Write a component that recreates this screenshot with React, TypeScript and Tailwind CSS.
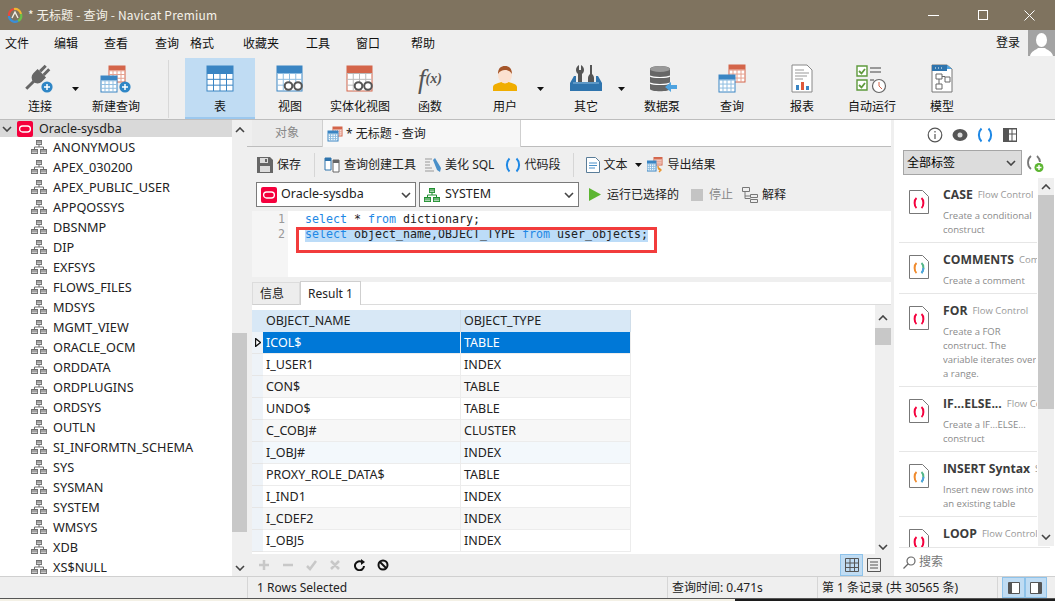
import type { ReactNode } from "react";

const menus = [
  { label: "文件", width: "w-[49px]" },
  { label: "编辑", width: "w-[50px]" },
  { label: "查看", width: "w-[51px]" },
  { label: "查询", width: "w-[35px]" },
  { label: "格式", width: "w-[53px]" },
  { label: "收藏夹", width: "w-[63px]" },
  { label: "工具", width: "w-[50px]" },
  { label: "窗口", width: "w-[55px]" },
  { label: "帮助", width: "w-[40px]" },
];

const schemas = [
  "ANONYMOUS",
  "APEX_030200",
  "APEX_PUBLIC_USER",
  "APPQOSSYS",
  "DBSNMP",
  "DIP",
  "EXFSYS",
  "FLOWS_FILES",
  "MDSYS",
  "MGMT_VIEW",
  "ORACLE_OCM",
  "ORDDATA",
  "ORDPLUGINS",
  "ORDSYS",
  "OUTLN",
  "SI_INFORMTN_SCHEMA",
  "SYS",
  "SYSMAN",
  "SYSTEM",
  "WMSYS",
  "XDB",
  "XS$NULL",
];

const rows = [
  ["ICOL$", "TABLE", "bg-[#0078d7] text-white"],
  ["I_USER1", "INDEX", "bg-white"],
  ["CON$", "TABLE", "bg-[#f7f7f7]"],
  ["UNDO$", "TABLE", "bg-white"],
  ["C_COBJ#", "CLUSTER", "bg-[#f7f7f7]"],
  ["I_OBJ#", "INDEX", "bg-[#f3f8fc]"],
  ["PROXY_ROLE_DATA$", "TABLE", "bg-white"],
  ["I_IND1", "INDEX", "bg-white"],
  ["I_CDEF2", "INDEX", "bg-[#f7f7f7]"],
  ["I_OBJ5", "INDEX", "bg-white"],
];

const snippets = [
  { title: "CASE", tag: "Flow Control", lines: ["Create a conditional", "construct"], multi: false, h: "h-[65px]" },
  { title: "COMMENTS", tag: "Comment", lines: ["Create a comment"], multi: true, h: "h-[51px]" },
  { title: "FOR", tag: "Flow Control", lines: ["Create a FOR", "construct. The", "variable iterates over", "a range."], multi: false, h: "h-[93px]" },
  { title: "IF...ELSE...", tag: "Flow Control", lines: ["Create a IF...ELSE...", "construct"], multi: false, h: "h-[65px]" },
  { title: "INSERT Syntax", tag: "SQL", lines: ["Insert new rows into", "an existing table"], multi: true, h: "h-[65px]" },
  { title: "LOOP", tag: "Flow Control", lines: ["Create a loop"], multi: false, h: "h-[65px]" },
];

function Caret() {
  return (
    <svg viewBox="0 0 7 4" className="h-[4px] w-[7px] shrink-0">
      <path d="M0 0h7L3.5 4z" fill="#111" />
    </svg>
  );
}

function Chevron({ up, className }: { up?: boolean; className?: string }) {
  return (
    <svg viewBox="0 0 10 6" className={`h-[6px] w-[10px] shrink-0 ${className ?? ""}`}>
      <path d={up ? "M1 5l4-4 4 4" : "M1 1l4 4 4-4"} fill="none" stroke="#444" strokeWidth="1.6" />
    </svg>
  );
}

function SchemaIcon({ color = "#6f6f6f" }: { color?: string }) {
  return (
    <svg viewBox="0 0 16 14" className="h-[14px] w-[16px] shrink-0">
      <path d="M5 0h6v5H5zM0 9h7v5H0zM9 9h7v5H9z" fill={color} />
      <path d="M5.8 2h4.4M5.8 3.6h4.4M.8 11h5.4M.8 12.6h5.4M9.8 11h5.4M9.8 12.6h5.4" stroke="#fff" strokeWidth=".7" />
      <path d="M8 5v2M3.5 9V7h9v2" fill="none" stroke={color} />
    </svg>
  );
}

function OracleBadge({ size }: { size: string }) {
  return (
    <svg viewBox="0 0 16 16" className={`${size} shrink-0`}>
      <rect width="16" height="16" rx="2" fill="#f5003d" />
      <rect x="2.6" y="5" width="10.8" height="6" rx="3" fill="none" stroke="#fff" strokeWidth="1.3" />
    </svg>
  );
}

function Sheet({ x, y, w, h, color, line }: { x: number; y: number; w: number; h: number; color: string; line: string }) {
  const cols = [1, 2, 3].map((i) => x + (w * i) / 4);
  const lines = [0, 1, 2].map((i) => y + h * 0.3 + ((h * 0.7) / 3) * i);
  return (
    <g>
      <rect x={x} y={y} width={w} height={h} fill="#fff" stroke={color} />
      <rect x={x} y={y} width={w} height={h * 0.28} fill={color} />
      {cols.map((c) => (
        <path key={c} d={`M${c} ${y + h * 0.28}V${y + h}`} stroke={line} />
      ))}
      {lines.map((l) => (
        <path key={l} d={`M${x} ${l}H${x + w}`} stroke={line} />
      ))}
    </g>
  );
}

function Glasses() {
  return (
    <g fill="#fff" stroke="#555" strokeWidth="2">
      <circle cx="14.5" cy="22" r="3.8" />
      <circle cx="24" cy="22" r="3.8" />
    </g>
  );
}

function PlusDot({ cx, cy }: { cx: number; cy: number }) {
  return (
    <g>
      <circle cx={cx} cy={cy} r="5.6" fill="#2f86c6" />
      <path d={`M${cx - 3} ${cy}h6M${cx} ${cy - 3}v6`} stroke="#fff" strokeWidth="1.5" />
    </g>
  );
}

function ToolIcon({ name }: { name: string }) {
  const box = "h-[30px] w-[32px]";
  if (name === "connect")
    return (
      <svg viewBox="0 0 32 30" className={box}>
        <g transform="rotate(45 15 12)" fill="#666">
          <path d="M9 8h12v6a6 6 0 0 1-12 0z" />
          <path d="M11 0h3v8h-3zM16 0h3v8h-3z" />
          <path d="M13.500 19h3v11h-3z" />
        </g>
        <PlusDot cx={23} cy={23} />
      </svg>
    );
  if (name === "newquery")
    return (
      <svg viewBox="0 0 32 30" className={box}>
        <Sheet x={9} y={2} w={16} h={16} color="#d4654a" line="#e6a08f" />
        <Sheet x={1} y={12} w={16} h={16} color="#3a85c3" line="#8fbde0" />
        <PlusDot cx={25} cy={23} />
      </svg>
    );
  if (name === "table")
    return (
      <svg viewBox="0 0 32 30" className={box}>
        <Sheet x={3} y={2} w={26} h={25} color="#3a85c3" line="#3a85c3" />
      </svg>
    );
  if (name === "view")
    return (
      <svg viewBox="0 0 32 30" className={box}>
        <Sheet x={3} y={2} w={25} h={25} color="#3a85c3" line="#8fbde0" />
        <Glasses />
      </svg>
    );
  if (name === "matview")
    return (
      <svg viewBox="0 0 32 30" className={box}>
        <Sheet x={3} y={2} w={25} h={25} color="#d4654a" line="#bbb" />
        <Glasses />
      </svg>
    );
  if (name === "func")
    return (
      <div className={`${box} flex items-center justify-center font-['Liberation_Serif',serif] italic text-[#555]`}>
        <span className="text-[27px] leading-none">f</span>
        <span className="text-[14px] font-bold leading-none">(x)</span>
      </div>
    );
  if (name === "user")
    return (
      <svg viewBox="0 0 32 30" className={box}>
        <path d="M4 27v-4c0-3 6-4 8-5h8c2 1 8 2 8 5v4z" fill="#f0ad00" />
        <ellipse cx="16" cy="11" rx="7" ry="8.5" fill="#fbe1d0" />
        <path d="M9 10c0-6 3-8 7-8s7 2 7 8c-2-3-4-4-7-4s-5 1-7 4z" fill="#a5562a" />
      </svg>
    );
  if (name === "other")
    return (
      <svg viewBox="0 0 32 30" className={box}>
        <path d="M11 1v5h-2V1C7 2 6 4 6 6c0 2 1 3 2 4v9h4v-9c1-1 2-2 2-4 0-2-1-4-3-5z" fill="#555" />
        <path d="M20 1h2v9c1 1 2 2 2 4v5h-6v-5c0-2 1-3 2-4z" fill="#555" />
        <path d="M0 19l4-7h2v6h20v-6h2l4 7v8H0z" fill="#2f74ad" />
        <path d="M3 19h26" stroke="#8dbce0" />
      </svg>
    );
  if (name === "pump")
    return (
      <svg viewBox="0 0 32 30" className={box}>
        <path d="M4 5c0-4 20-4 20 0v20c0 3-20 3-20 0z" fill="#666" />
        <ellipse cx="14" cy="5" rx="10" ry="3" fill="#999" />
        <path d="M4 12c3 2 17 2 20 0M4 19c3 2 17 2 20 0" stroke="#fff" fill="none" strokeWidth="1.2" />
        <path d="M19 23l6-5v3h6v4h-6v3z" fill="#4ea3e0" />
      </svg>
    );
  if (name === "query")
    return (
      <svg viewBox="0 0 32 30" className={box}>
        <Sheet x={13} y={1} w={16} h={17} color="#d4654a" line="#e6a08f" />
        <Sheet x={3} y={11} w={16} h={17} color="#3a85c3" line="#8fbde0" />
      </svg>
    );
  if (name === "report")
    return (
      <svg viewBox="0 0 32 30" className={box}>
        <path d="M6 1h15l5 5v22H6z" fill="#fff" stroke="#888" />
        <path d="M9 6h9M9 9h14M9 12h12M9 15h8" stroke="#999" />
        <path d="M10 21h3v5h-3z" fill="#3a85c3" />
        <path d="M15 18h3v8h-3z" fill="#e0583a" />
        <path d="M20 22h3v4h-3z" fill="#3a85c3" />
      </svg>
    );
  if (name === "auto")
    return (
      <svg viewBox="0 0 32 30" className={box}>
        <path d="M1 2h10v10H1zM1 16h10v10H1z" fill="#fff" stroke="#5e9a3c" strokeWidth="1.4" />
        <path d="M3 7l2.5 2.5L9 5M3 21l2.5 2.5L9 19" fill="none" stroke="#5e9a3c" strokeWidth="1.8" />
        <path d="M14 4h11M14 8h11M14 16h4" stroke="#999" strokeWidth="1.8" />
        <circle cx="23" cy="22" r="6.5" fill="#fff" stroke="#666" strokeWidth="1.2" />
        <path d="M23 22v-4M23 22l3 3" stroke="#d4654a" />
      </svg>
    );
  return (
    <svg viewBox="0 0 32 30" className={box}>
      <path d="M6 1h15l5 4v23H6z" fill="#fff" stroke="#777" />
      <path d="M6 1h15v6H6z" fill="#2f74ad" />
      <path d="M21 1l5 4h-5z" fill="#4ea3e0" />
      <path d="M9 4h1M12 4h1M15 4h1" stroke="#fff" />
      <path d="M10 10h6v5h-6zM19 13h5v5h-5zM10 20h6v5h-6z" fill="#fff" stroke="#666" />
      <path d="M16 12.5h3M13 15v5" stroke="#666" />
    </svg>
  );
}

function Tool({ name, label, active }: { name: string; label: string; active?: boolean }) {
  return (
    <div className={`flex h-[61px] w-[70px] shrink-0 flex-col items-center pt-[6px] ${active ? "border-b-2 border-[#9cc8ee] bg-[#c0dcf3]" : ""}`}>
      <ToolIcon name={name} />
      <span className="mt-[4px] whitespace-nowrap text-[12px] leading-[16px]">{label}</span>
    </div>
  );
}

function Spacer({ className, children }: { className: string; children?: ReactNode }) {
  return <div className={`flex h-[61px] shrink-0 items-center ${className}`}>{children}</div>;
}

function CodeIcon({ multi }: { multi?: boolean }) {
  const left = multi ? "#f08a2c" : "#f5003d";
  const right = multi ? "#4ea3e0" : "#f5003d";
  return (
    <svg viewBox="0 0 20 24" className="h-[24px] w-[20px] shrink-0">
      <path d="M.5.5h13l6 6v17H.5z" fill="#fff" stroke="#777" />
      <path d="M7.5 8c-2.5 2-2.5 8 0 10" fill="none" stroke={left} strokeWidth="2" />
      <path d="M12.5 8c2.5 2 2.5 8 0 10" fill="none" stroke={multi ? "#52b788" : right} strokeWidth="2" />
      {multi && <path d="M14.4 13c0 2-.8 3.700-1.900 5" fill="none" stroke={right} strokeWidth="2" />}
    </svg>
  );
}

function Parens({ className, color = "#1e88e5" }: { className?: string; color?: string }) {
  return (
    <svg viewBox="0 0 16 16" className={`h-[16px] w-[16px] shrink-0 ${className ?? ""}`}>
      <path d="M4.500 1.500c-3.500 3.500-3.500 9.500 0 13M11.500 1.500c3.500 3.500 3.500 9.500 0 13" fill="none" stroke={color} strokeWidth="2" />
    </svg>
  );
}

function TitleBar() {
  return (
    <div className="flex h-[30px] shrink-0 items-center bg-[#7f735f] text-[#f5f2ea]">
      <svg viewBox="0 0 16 16" className="ml-[7px] h-[16px] w-[16px] shrink-0" fill="none" strokeWidth="2.200">
        <path d="M2 9a6 6 0 0 1 5-7" stroke="#e8493a" />
        <path d="M7 2a6 6 0 0 1 7 5" stroke="#f2b632" />
        <path d="M14 7a6 6 0 0 1-3 7" stroke="#6abf4b" />
        <path d="M11 14a6 6 0 0 1-9-5" stroke="#3a8fd8" />
        <path d="M5 11l3-6 3 6" stroke="#f3efe6" strokeWidth="1.400" />
      </svg>
      <span className="ml-[5px] text-[12px] tracking-[0.2px]">* 无标题 - 查询 - Navicat Premium</span>
      <div className="ml-auto flex items-center">
        <div className="mr-[39px] h-px w-[11px] bg-white" />
        <div className="mr-[36px] h-[10px] w-[10px] border border-white" />
        <svg viewBox="0 0 11 11" className="mr-[20px] h-[11px] w-[11px]">
          <path d="M.5.5l10 10M10.500.5l-10 10" stroke="#fff" />
        </svg>
      </div>
    </div>
  );
}

function Toolbar() {
  return (
    <div className="shrink-0 border-b border-[#bdbdbd] bg-[#efefef] text-[#111]">
      <div className="flex h-[28px] items-start pl-[5px]">
        {menus.map((menu) => (
          <span key={menu.label + menu.width} className={`${menu.width} pt-[4px] text-[12px] leading-[18px]`}>
            {menu.label}
          </span>
        ))}
        <span className="ml-auto mr-[8px] pt-[3px] text-[12px] leading-[18px]">登录</span>
        <div className="flex h-[26px] w-[27px] items-end justify-center overflow-hidden bg-[#a3a3a3]">
          <svg viewBox="0 0 27 26" className="h-[26px] w-[27px]">
            <ellipse cx="13.500" cy="10" rx="5.500" ry="7" fill="#fff" />
            <path d="M2 26c1-5 6-6 8-8h7c2 2 7 3 8 8z" fill="#fff" />
          </svg>
        </div>
      </div>
      <div className="flex h-[61px] items-start pl-[5px]">
        <Tool name="connect" label="连接" />
        <Spacer className="w-[6px] -translate-x-[3px]">
          <Caret />
        </Spacer>
        <Tool name="newquery" label="新建查询" />
        <Spacer className="ml-[17px] mr-[16px] w-px">
          <div className="h-[58px] w-px bg-[#d8d8d8]" />
        </Spacer>
        <Tool name="table" label="表" active />
        <Tool name="view" label="视图" />
        <Tool name="matview" label="实体化视图" />
        <Tool name="func" label="函数" />
        <div className="w-[5px] shrink-0" />
        <Tool name="user" label="用户" />
        <Spacer className="w-[11px] -translate-x-[3px]">
          <Caret />
        </Spacer>
        <Tool name="other" label="其它" />
        <Spacer className="w-[6px] -translate-x-[3px]">
          <Caret />
        </Spacer>
        <Tool name="pump" label="数据泵" />
        <Tool name="query" label="查询" />
        <Tool name="report" label="报表" />
        <Tool name="auto" label="自动运行" />
        <Tool name="model" label="模型" />
      </div>
    </div>
  );
}

function Sidebar() {
  return (
    <div className="flex w-[247px] shrink-0 bg-white">
      <div className="w-[232px] shrink-0 overflow-hidden text-[#222]">
        <div className="flex h-[17px] items-center bg-[#d9d9d9]">
          <Chevron className="ml-[2px]" />
          <div className="ml-[5px]">
            <OracleBadge size="h-[16px] w-[16px]" />
          </div>
          <span className="ml-[6px] text-[12.500px] leading-[17px]">Oracle-sysdba</span>
        </div>
        {schemas.map((name) => (
          <div key={name} className="flex h-[20px] items-center pl-[31px]">
            <SchemaIcon />
            <span className="ml-[6px] whitespace-nowrap text-[12.700px] leading-[20px]">{name}</span>
          </div>
        ))}
      </div>
      <div className="flex w-[15px] shrink-0 flex-col items-center bg-[#efefef]">
        <Chevron up className="mt-[7px]" />
        <div className="mt-[200px] h-[199px] w-full bg-[#c8c8c8]" />
        <Chevron className="mt-[33px]" />
      </div>
    </div>
  );
}

function QueryPane() {
  return (
    <div className="flex w-[644px] shrink-0 flex-col text-[#222]">
      <div className="flex h-[27px] shrink-0 border-b border-[#bdbdbd] pl-[5px]">
        <div className="flex w-[70px] items-center justify-center bg-[#ebebeb] text-[12px] text-[#888]">对象</div>
        <div className="flex h-[27px] w-[199px] items-center border-x border-[#cfcfcf] bg-[#f7f7f7] pl-[4px]">
          <svg viewBox="0 0 16 16" className="h-[16px] w-[16px] shrink-0">
            <Sheet x={6} y={1} w={9} h={9} color="#d4654a" line="#e6a08f" />
            <Sheet x={1} y={5} w={10} h={10} color="#3a85c3" line="#8fbde0" />
          </svg>
          <span className="ml-[3px] text-[12px]">* 无标题 - 查询</span>
        </div>
        <div className="flex-1 bg-white" />
      </div>
      <div className="flex h-[34px] shrink-0 items-center pl-[10px] pt-[2px] text-[12px]">
        <svg viewBox="0 0 16 16" className="h-[16px] w-[16px] shrink-0">
          <path d="M0 0h13l3 3v13H0z" fill="#666" />
          <path d="M3 1h8v5H3zM3 9h10v6H3z" fill="#ddd" />
          <path d="M8 2h2v3H8z" fill="#666" />
        </svg>
        <span className="ml-[4px]">保存</span>
        <div className="ml-[13px] mr-[9px] h-[24px] w-px bg-[#d6d6d6]" />
        <svg viewBox="0 0 16 16" className="h-[16px] w-[16px] shrink-0">
          <path d="M1 1h6v12H1z" fill="#fff" stroke="#2f74ad" />
          <path d="M9 3h6v12H9z" fill="#fff" stroke="#666" />
          <path d="M1 1h6v3H1z" fill="#2f74ad" />
          <path d="M9 3h6v3H9z" fill="#666" />
        </svg>
        <span className="ml-[4px]">查询创建工具</span>
        <svg viewBox="0 0 16 16" className="ml-[9px] h-[16px] w-[16px] shrink-0">
          <path d="M0 2h7M0 5h5M0 8h5M0 11h7M0 14h9" stroke="#999" />
          <path d="M8 3l2-2 6 10-1 4-3-2z" fill="#4a90c9" />
        </svg>
        <span className="ml-[4px] font-['Noto_Sans','Noto_Sans_CJK_SC',sans-serif]">美化 SQL</span>
        <Parens className="ml-[11px]" />
        <span className="ml-[3px]">代码段</span>
        <div className="ml-[13px] mr-[12px] h-[24px] w-px bg-[#d6d6d6]" />
        <svg viewBox="0 0 14 16" className="h-[16px] w-[14px] shrink-0">
          <path d="M.5.500h9l4 4v11H.500z" fill="#fff" stroke="#5a7d99" />
          <path d="M3 6h8M3 8.500h8M3 11h6" stroke="#4a90c9" />
        </svg>
        <span className="ml-[3px]">文本</span>
        <div className="ml-[8px] mr-[5px]">
          <Caret />
        </div>
        <svg viewBox="0 0 16 16" className="h-[16px] w-[16px] shrink-0">
          <Sheet x={7} y={0} w={8} h={8} color="#d4654a" line="#e6a08f" />
          <Sheet x={0} y={4} w={9} h={10} color="#3a85c3" line="#8fbde0" />
          <path d="M11 9c0 3 1 4 3 4M12 15l2-2-2-2" fill="none" stroke="#e8932c" strokeWidth="1.400" />
        </svg>
        <span className="ml-[4px]">导出结果</span>
      </div>
      <div className="mt-px flex h-[25px] shrink-0 items-center pl-[9px] text-[12px]">
        <div className="flex h-[25px] w-[160px] items-center border border-[#7a7a7a] bg-white pl-[4px]">
          <OracleBadge size="h-[16px] w-[16px]" />
          <span className="ml-[4px] text-[12.500px]">Oracle-sysdba</span>
          <Chevron className="ml-auto mr-[4px]" />
        </div>
        <div className="ml-[3px] flex h-[25px] w-[160px] items-center border border-[#7a7a7a] bg-white pl-[4px]">
          <SchemaIcon color="#1f8f2f" />
          <span className="ml-[5px] text-[12.500px]">SYSTEM</span>
          <Chevron className="ml-auto mr-[4px]" />
        </div>
        <svg viewBox="0 0 12 13" className="ml-[10px] h-[13px] w-[12px] shrink-0">
          <path d="M0 0l12 6.500L0 13z" fill="#5cb531" />
        </svg>
        <span className="ml-[6px]">运行已选择的</span>
        <div className="ml-[12px] h-[12px] w-[12px] bg-[#c4c4c4]" />
        <span className="ml-[6px] text-[#8a8a8a]">停止</span>
        <svg viewBox="0 0 16 16" className="ml-[9px] h-[16px] w-[16px] shrink-0" fill="none" stroke="#777">
          <path d="M.5.500h7v4h-7zM8.500 7.500h7v3h-7zM8.500 12.500h7v3h-7zM3 4.500v7h5.500M3 9h5.500" />
        </svg>
        <span className="ml-[4px]">解释</span>
      </div>
      <div className="relative ml-[5px] mt-[4px] flex h-[66px] shrink-0 bg-white font-['DejaVu_Sans_Mono',monospace] text-[11.630px] leading-[15px]">
        <div className="w-[36px] shrink-0 bg-[#f5f5f5] pr-[3px] pt-[1px] text-right text-[#999]">
          <div>1</div>
          <div>2</div>
        </div>
        <div className="pl-[17px] pt-[1px]">
          <div className="whitespace-pre">
            <span className="text-[#1e88e5]">select</span> * <span className="text-[#1e88e5]">from</span> dictionary;
          </div>
          <div className="whitespace-pre bg-[#bcdcf8]">
            <span className="text-[#1e88e5]">select</span> object_name,OBJECT_TYPE <span className="text-[#1e88e5]">from</span> user_objects;
          </div>
        </div>
        <div className="absolute left-[44px] top-[16px] h-[26px] w-[361px] border-[3px] border-[#f23c3c]" />
      </div>
      <div className="ml-[5px] mt-[5px] flex h-[23px] shrink-0 items-end bg-white text-[12px]">
        <div className="flex h-[23px] w-[48px] items-center border border-[#dcdcdc] border-b-[#cfcfcf] bg-[#ededed] pl-[7px]">信息</div>
        <div className="-mb-px flex h-[25px] w-[61px] items-center justify-center border-x border-t border-[#cfcfcf] bg-white font-['Noto_Sans',sans-serif]">
          Result 1
        </div>
        <div className="h-px flex-1 bg-[#dcdcdc]" />
      </div>
      <div className="ml-[5px] flex h-[249px] shrink-0 bg-white">
        <div className="flex-1 pt-[5px] font-['Noto_Sans',sans-serif] text-[12.500px]">
          <div className="flex h-[22px] w-[379px] bg-[#d8e8f6]">
            <div className="w-[11px] shrink-0" />
            <div className="flex w-[198px] items-center border-r border-[#cfdde9] pl-[3px]">OBJECT_NAME</div>
            <div className="flex w-[170px] items-center border-r border-[#cfdde9] pl-[3px]">OBJECT_TYPE</div>
          </div>
          {rows.map(([name, type, tone], i) => (
            <div key={name} className="flex h-[22px] w-[379px]">
              <div className="flex w-[11px] shrink-0 items-center justify-center border-b border-[#e6e6e6] bg-[#eef3f8]">
                {i === 0 && (
                  <svg viewBox="0 0 6 9" className="h-[9px] w-[6px]">
                    <path d="M.5.500L5.500 4.500.5 8.500z" fill="#fff" stroke="#111" strokeWidth="1.400" />
                  </svg>
                )}
              </div>
              <div className={`flex w-[198px] items-center border-b border-r border-[#ececec] pl-[3px] pt-px ${tone}`}>{name}</div>
              <div className={`flex w-[170px] items-center border-b border-r border-[#ececec] pl-[3px] pt-px ${tone}`}>{type}</div>
            </div>
          ))}
        </div>
        <div className="flex w-[16px] shrink-0 flex-col items-center bg-[#efefef]">
          <Chevron up className="mt-[10px]" />
          <div className="mt-[7px] h-[17px] w-full bg-[#c8c8c8]" />
          <Chevron className="mt-[199px]" />
        </div>
      </div>
      <div className="flex h-[22px] shrink-0 items-center pl-[12px] text-[#c4c4c4]">
        <svg viewBox="0 0 144 12" className="h-[12px] w-[144px]" fill="none" strokeWidth="2.500">
          <path d="M0 6h10M5 1v10M24 6h10M48 7l3 3 6-8M72 2l8 8M80 2l-8 8" stroke="#c8c8c8" />
          <path d="M103 3a4.500 4.500 0 1 0 2 4" stroke="#111" strokeWidth="2" />
          <path d="M102 0l4 3-4 3z" fill="#111" stroke="none" />
          <circle cx="124" cy="6" r="4.500" stroke="#111" strokeWidth="2" />
          <path d="M121 3l6 6" stroke="#111" strokeWidth="2" />
        </svg>
        <div className="ml-auto flex h-[22px] w-[23px] items-center justify-center border border-[#8fc3ea] bg-[#c0dcf3]">
          <svg viewBox="0 0 14 14" className="h-[14px] w-[14px]" fill="none" stroke="#555">
            <path d="M.5.500h13v13H.500zM.5 5h13M.5 9.500h13M5 .5v13M9.500.5v13" />
          </svg>
        </div>
        <div className="ml-[3px] mr-[9px] flex h-[22px] w-[16px] items-center justify-center">
          <svg viewBox="0 0 14 14" className="h-[14px] w-[14px]" fill="none" stroke="#555">
            <path d="M.5.500h13v13H.500zM3 4h8M3 7h8M3 10h8" />
          </svg>
        </div>
      </div>
    </div>
  );
}

function SnippetPanel() {
  return (
    <div className="flex w-[161px] shrink-0 flex-col bg-white">
      <div className="flex h-[30px] shrink-0 items-center pl-[33px]">
        <svg viewBox="0 0 16 16" className="h-[16px] w-[16px]" fill="none" stroke="#555" strokeWidth="1.200">
          <circle cx="8" cy="8" r="6.800" />
          <path d="M8 7v5M8 4v1.500" />
        </svg>
        <svg viewBox="0 0 16 16" className="ml-[9px] h-[16px] w-[16px]">
          <ellipse cx="8" cy="8" rx="7.500" ry="6" fill="#555" />
          <circle cx="8" cy="8" r="2.500" fill="#ddd" />
        </svg>
        <Parens className="ml-[9px]" />
        <svg viewBox="0 0 16 16" className="ml-[9px] h-[16px] w-[16px]">
          <path d="M1 1h14v14H1z" fill="#555" />
          <path d="M7 2.500h2.500v4H7zM10.500 2.500H14v4h-3.500zM7 7.500h2.500v6H7zM10.500 7.500H14v6h-3.500z" fill="#fff" />
        </svg>
      </div>
      <div className="flex h-[25px] shrink-0 items-center pl-[9px]">
        <div className="flex h-[25px] w-[119px] items-center border border-[#a5a5a5] bg-[#dcdcdc] pl-[3px] pt-px text-[12px]">
          全部标签
          <Chevron className="ml-auto mr-[5px]" />
        </div>
        <svg viewBox="0 0 18 18" className="ml-[4px] h-[18px] w-[18px]">
          <path d="M5 2c-4 3-4 10 0 13M11 2c2 2 3 4 3 6" fill="none" stroke="#777" strokeWidth="1.800" />
          <circle cx="13" cy="13.500" r="4.500" fill="#5cb531" />
          <path d="M10.500 13.500h5M13 11v5" stroke="#fff" strokeWidth="1.400" />
        </svg>
      </div>
      <div className="flex h-[372px] shrink-0 overflow-hidden pl-[5px] pt-[3px]">
        <div className="w-[138px] shrink-0 overflow-hidden font-['Open_Sans',sans-serif]">
          {snippets.map((s) => (
            <div key={s.title} className={`flex ${s.h} shrink-0 border-b border-[#e6e6e6] pl-[10px]`}>
              <div className="pt-[12px]">
                <CodeIcon multi={s.multi} />
              </div>
              <div className="ml-[14px] min-w-0 overflow-hidden pt-[9px]">
                <div className="flex h-[16px] items-center whitespace-nowrap">
                  <span className="text-[12.200px] font-bold leading-[16px] text-[#3c3c3c]">{s.title}</span>
                  <span className="ml-[5px] text-[9.500px] leading-[16px] text-[#999]">{s.tag}</span>
                </div>
                <div className="mt-[6px] whitespace-nowrap text-[9.500px] leading-[14px] text-[#8a8a8a]">
                  {s.lines.map((line) => (
                    <div key={line}>{line}</div>
                  ))}
                </div>
              </div>
            </div>
          ))}
        </div>
        <div className="ml-px flex h-[368px] w-[16px] shrink-0 flex-col items-center bg-[#efefef]">
          <Chevron up className="mt-[6px]" />
          <div className="mt-[5px] h-[214px] w-full bg-[#c8c8c8]" />
          <Chevron className="mt-[125px]" />
        </div>
      </div>
      <div className="ml-[5px] mr-[5px] flex h-[29px] shrink-0 items-center border-t border-[#e6e6e6] pl-[4px] text-[12px] text-[#777]">
        <svg viewBox="0 0 13 13" className="h-[13px] w-[13px]" fill="none" stroke="#666" strokeWidth="1.200">
          <circle cx="8" cy="5" r="4" />
          <path d="M5 8l-4.500 4.500" />
        </svg>
        <span className="ml-[3px]">搜索</span>
      </div>
    </div>
  );
}

function StatusBar() {
  return (
    <div className="flex h-[22px] shrink-0 items-center border-t border-[#d0d0d0] bg-[#efefef] font-['Noto_Sans','Noto_Sans_CJK_SC',sans-serif] text-[12px] text-[#222]">
      <div className="h-full w-[248px] shrink-0 border-r border-[#d6d6d6]" />
      <div className="h-full w-[420px] shrink-0 border-r border-[#d6d6d6] pl-[9px] leading-[21px]">1 Rows Selected</div>
      <div className="h-full w-[150px] shrink-0 border-r border-[#d6d6d6] pl-[4px] leading-[21px]">查询时间: 0.471s</div>
      <div className="h-full w-[180px] shrink-0 border-r border-[#d6d6d6] pl-[4px] leading-[21px]">第 1 条记录 (共 30565 条)</div>
      <div className="ml-[4px] flex">
        <div className="flex h-[21px] w-[23px] items-center justify-center border border-[#8fc3ea] bg-[#c0dcf3]">
          <svg viewBox="0 0 12 12" className="h-[12px] w-[12px]">
            <path d="M.5.500h11v11H.500z" fill="#fff" stroke="#555" />
            <path d="M1 1h3v10H1z" fill="#555" />
          </svg>
        </div>
        <div className="flex h-[21px] w-[22px] items-center justify-center border border-[#8fc3ea] bg-[#c0dcf3]">
          <svg viewBox="0 0 12 12" className="h-[12px] w-[12px]">
            <path d="M.5.500h11v11H.500z" fill="#fff" stroke="#555" />
            <path d="M8 1h3v10H8z" fill="#555" />
          </svg>
        </div>
      </div>
    </div>
  );
}

export default function App() {
  return (
    <div className="flex h-[601px] w-[1055px] flex-col overflow-hidden bg-[#efefef] font-['Noto_Sans_CJK_SC','Noto_Sans',sans-serif]">
      <TitleBar />
      <Toolbar />
      <div className="flex h-[456px] shrink-0 overflow-hidden font-['Noto_Sans','Noto_Sans_CJK_SC',sans-serif]">
        <Sidebar />
        <QueryPane />
        <div className="w-[3px] shrink-0" />
        <SnippetPanel />
      </div>
      <StatusBar />
      <div className="flex h-[3px] shrink-0 border-t border-[#555]">
        <div className="w-[735px] bg-[#f4f1e6]" />
        <div className="flex-1 bg-[#1c1c1c]" />
      </div>
    </div>
  );
}
